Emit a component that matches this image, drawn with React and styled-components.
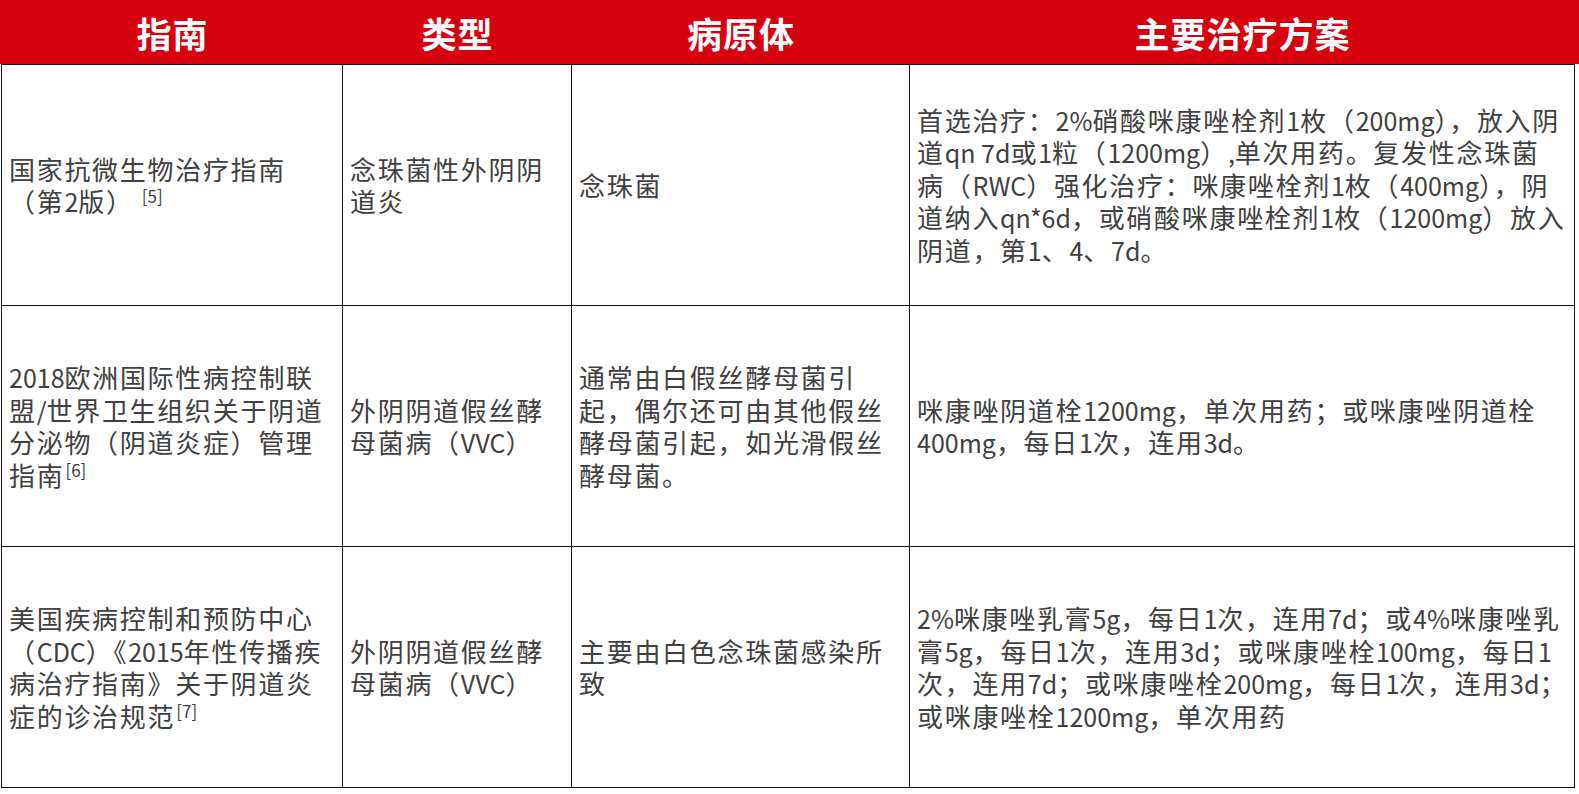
import React from 'react';
import styled, { createGlobalStyle } from 'styled-components';

const GlobalStyle = createGlobalStyle`
  html, body {
    margin: 0;
    padding: 0;
    background: #ffffff;
  }
  body {
    font-family: "Noto Sans CJK SC", sans-serif;
  }
`;

const COLUMNS = '341px 229px 338px 665px';

const Page = styled.div`
  width: 1579px;
  height: 794px;
  overflow: hidden;
`;

const HeaderBar = styled.div`
  height: 64px;
  background: #d7000f;
  display: grid;
  grid-template-columns: ${COLUMNS};
  padding-left: 2px;
`;

const HeaderCell = styled.div`
  display: flex;
  align-items: center;
  justify-content: center;
  color: #ffffff;
  font-weight: 700;
  font-size: 35px;
  letter-spacing: 1px;
`;

const Body = styled.div`
  margin-left: 1px;
  width: 1574px;
  display: grid;
  grid-template-columns: ${COLUMNS};
  grid-auto-rows: 241px;
  border-top: 1px solid #111;
  border-left: 1px solid #111;
  box-sizing: border-box;
`;

const Cell = styled.div`
  display: flex;
  align-items: center;
  padding: 0 4px 0 7px;
  border-right: 1px solid #111;
  border-bottom: 1px solid #111;
  color: #404040;
  font-size: 26px;
  line-height: 32.5px;
  letter-spacing: 1.7px;
  white-space: nowrap;
  overflow: hidden;
`;

// half-width runs (digits, units) are narrower than the CJK text, as in the source
const Latin = styled.span`
  font-size: 25px;
  letter-spacing: 0;
`;

const Ref = styled.sup`
  font-size: 17px;
  line-height: 0;
  vertical-align: 9px;
  margin-left: ${(p) => (p.$gap ? 8 : 1)}px;
  letter-spacing: 0;
`;

const rich = (text) =>
  text.split(/([\x20-\x7e]+)/).map((part, i) =>
    i % 2 ? <Latin key={i}>{part}</Latin> : part
  );

const lines = (arr) =>
  arr.map((line, i) => (
    <React.Fragment key={i}>
      {i > 0 && <br />}
      {rich(line)}
    </React.Fragment>
  ));

const rows = [
  {
    guide: ['国家抗微生物治疗指南', '（第2版）'],
    ref: '[5]',
    gap: true,
    type: ['念珠菌性外阴阴', '道炎'],
    pathogen: ['念珠菌'],
    plan: [
      '首选治疗：2%硝酸咪康唑栓剂1枚（200mg），放入阴',
      '道qn 7d或1粒（1200mg）,单次用药。复发性念珠菌',
      '病（RWC）强化治疗：咪康唑栓剂1枚（400mg），阴',
      '道纳入qn*6d，或硝酸咪康唑栓剂1枚（1200mg）放入',
      '阴道，第1、4、7d。',
    ],
  },
  {
    guide: ['2018欧洲国际性病控制联', '盟/世界卫生组织关于阴道', '分泌物（阴道炎症）管理', '指南'],
    ref: '[6]',
    type: ['外阴阴道假丝酵', '母菌病（VVC）'],
    pathogen: ['通常由白假丝酵母菌引', '起，偶尔还可由其他假丝', '酵母菌引起，如光滑假丝', '酵母菌。'],
    plan: ['咪康唑阴道栓1200mg，单次用药；或咪康唑阴道栓', '400mg，每日1次，连用3d。'],
  },
  {
    guide: ['美国疾病控制和预防中心', '（CDC）《2015年性传播疾', '病治疗指南》关于阴道炎', '症的诊治规范'],
    ref: '[7]',
    type: ['外阴阴道假丝酵', '母菌病（VVC）'],
    pathogen: ['主要由白色念珠菌感染所', '致'],
    plan: [
      '2%咪康唑乳膏5g，每日1次，连用7d；或4%咪康唑乳',
      '膏5g，每日1次，连用3d；或咪康唑栓100mg，每日1',
      '次，连用7d；或咪康唑栓200mg，每日1次，连用3d；',
      '或咪康唑栓1200mg，单次用药',
    ],
  },
];

const App = () => (
  <Page>
    <GlobalStyle />
    <HeaderBar>
      <HeaderCell>指南</HeaderCell>
      <HeaderCell>类型</HeaderCell>
      <HeaderCell>病原体</HeaderCell>
      <HeaderCell>主要治疗方案</HeaderCell>
    </HeaderBar>
    <Body>
      {rows.map((row, i) => (
        <React.Fragment key={i}>
          <Cell>
            <span>
              {lines(row.guide)}
              <Ref $gap={row.gap}>{row.ref}</Ref>
            </span>
          </Cell>
          <Cell>
            <span>{lines(row.type)}</span>
          </Cell>
          <Cell>
            <span>{lines(row.pathogen)}</span>
          </Cell>
          <Cell>
            <span>{lines(row.plan)}</span>
          </Cell>
        </React.Fragment>
      ))}
    </Body>
  </Page>
);

export default App;
